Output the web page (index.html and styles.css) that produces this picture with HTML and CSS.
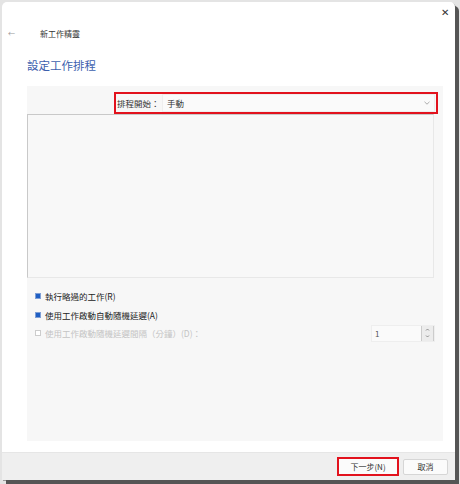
FILE: index.html
```html
<!DOCTYPE html>
<html lang="zh-Hant">
<head>
    <meta charset="UTF-8">
    <title>新工作精靈</title>
    <link rel="stylesheet" href="styles.css">
</head>
<body>
<div class="window">
    <div class="titlebar">
        <span class="close">&#x2715;</span>
    </div>
    <div class="nav">
        <span class="back">&#x2190;</span>
        <span class="navTitle">新工作精靈</span>
    </div>
    <h1 class="heading">設定工作排程</h1>

    <div class="panel">
        <div class="startRow">
            <div class="mark startBox">
                <span class="startLabel">排程開始：</span>
                <div class="select">
                    <span>手動</span>
                    <svg width="6" height="4" viewBox="0 0 6 4"><path d="M0.5 0.8 L3 3.2 L5.5 0.8" fill="none" stroke="#999" stroke-width="0.8"/></svg>
                </div>
            </div>
        </div>
        <div class="detailBox"></div>

        <div class="options">
            <label class="check"><span class="box on"></span>執行略過的工作(R)</label>
            <label class="check"><span class="box on"></span>使用工作啟動自動隨機延遲(A)</label>
            <div class="delayRow">
                <label class="check disabled"><span class="box"></span>使用工作啟動隨機延遲間隔（分鐘）(D)：</label>
                <div class="spinner">
                    <span class="spinValue">1</span>
                    <div class="spinButtons">
                        <svg width="9" height="7" viewBox="0 0 9 7"><path d="M3 4.5 L4.5 3 L6 4.5" fill="none" stroke="#777" stroke-width="0.8"/></svg>
                        <svg width="9" height="7" viewBox="0 0 9 7"><path d="M3 2.5 L4.5 4 L6 2.5" fill="none" stroke="#777" stroke-width="0.8"/></svg>
                    </div>
                </div>
            </div>
        </div>
    </div>

    <div class="footer">
        <button class="btn mark">下一步(N)</button>
        <button class="btn">取消</button>
    </div>
</div>
</body>
</html>
```

FILE: styles.css
```css
body {
    margin: 0;
    width: 460px;
    height: 484px;
    background-color: #e4e4e4;
    font-family: "Noto Sans CJK TC", "Liberation Sans", sans-serif;
    overflow: hidden;
}

.window {
    width: 453px;
    height: 478px;
    margin: 2px 0 0 2px;
    background-color: white;
    border-radius: 5px 5px 0 0;
    box-shadow: 4px 4px 0 #555, 1px 1px 0 #999;
    display: flex;
    flex-direction: column;
    overflow: hidden;
}

.titlebar {
    height: 20px;
    display: flex;
    justify-content: flex-end;
    align-items: center;
    padding-right: 6px;
}
.close {
    font-size: 10px;
    color: #333;
    line-height: 1;
}

.nav {
    height: 22px;
    display: flex;
    align-items: center;
    font-size: 8px;
    color: #333;
}
.back {
    width: 38px;
    padding-left: 6px;
    color: #999;
    font-size: 7px;
    box-sizing: border-box;
}

.heading {
    margin: 13px 0 0 25px;
    font-size: 11.5px;
    font-weight: normal;
    color: #3d5fae;
    line-height: 16px;
}

.panel {
    margin: 13px 0 0 25px;
    width: 416px;
    height: 355px;
    background-color: #f7f7f7;
    display: flex;
    flex-direction: column;
}

.mark {
    border: 2.5px solid #e2121d;
}

.startRow {
    display: flex;
    justify-content: flex-end;
    padding: 6px 5px 0 0;
}
.startBox {
    width: 324px;
    height: 22px;
    box-sizing: border-box;
    display: flex;
    align-items: center;
    font-size: 8.5px;
    color: #333;
}
.startLabel {
    width: 45px;
    padding-left: 1px;
}
.select {
    flex: 1;
    height: 16px;
    margin-right: 1px;
    background-color: #fafafa;
    border: 1px solid #eee;
    display: flex;
    align-items: center;
    justify-content: space-between;
    padding: 0 4px 0 4px;
}

.detailBox {
    width: 407px;
    height: 164px;
    box-sizing: border-box;
    border: 1px solid #c9c9c9;
    border-right-color: #e8e8e8;
    border-bottom-color: #e8e8e8;
    background-color: #f8f8f8;
}

.options {
    padding: 11px 8px 0 8px;
    display: flex;
    flex-direction: column;
    gap: 4.5px;
}
.check {
    height: 14px;
    display: flex;
    align-items: center;
    font-size: 8.5px;
    color: #222;
}
.check.disabled {
    color: #c4c4c4;
}
.box {
    width: 4px;
    height: 4px;
    margin-right: 4px;
    border: 1px solid #ccc;
    background-color: white;
}
.box.on {
    background-color: #1f5fc3;
    border-color: #7f9fd6;
}

.delayRow {
    height: 14px;
    display: flex;
    justify-content: space-between;
    align-items: center;
}
.spinner {
    width: 64px;
    height: 17px;
    flex-shrink: 0;
    background-color: #fafafa;
    border: 1px solid #eee;
    box-sizing: border-box;
    display: flex;
    font-size: 8px;
    color: #555;
}
.spinValue {
    flex: 1;
    padding-left: 3px;
    line-height: 15px;
}
.spinButtons {
    width: 11px;
    border-left: 1px solid #ccc;
    border-right: 1px solid #ccc;
    background-color: #ececec;
    display: flex;
    flex-direction: column;
    align-items: center;
    justify-content: center;
}

.footer {
    margin-top: auto;
    height: 27px;
    background-color: #efefef;
    border-top: 1px solid #e6e6e6;
    display: flex;
    justify-content: flex-end;
    align-items: center;
    gap: 4px;
    padding-right: 7px;
}
.btn {
    height: 16px;
    padding: 0 10px;
    font-family: "Noto Sans CJK TC", "Liberation Sans", sans-serif;
    font-size: 8px;
    color: #333;
    background-color: #fbfbfb;
    border: 1px solid #d6d6d6;
    border-radius: 2px;
    line-height: 1;
}
.btn.mark {
    width: 62px;
    height: 19px;
    border: 2.5px solid #e2121d;
    border-radius: 0;
}
.btn:last-child {
    width: 45px;
    padding: 0;
}
```
